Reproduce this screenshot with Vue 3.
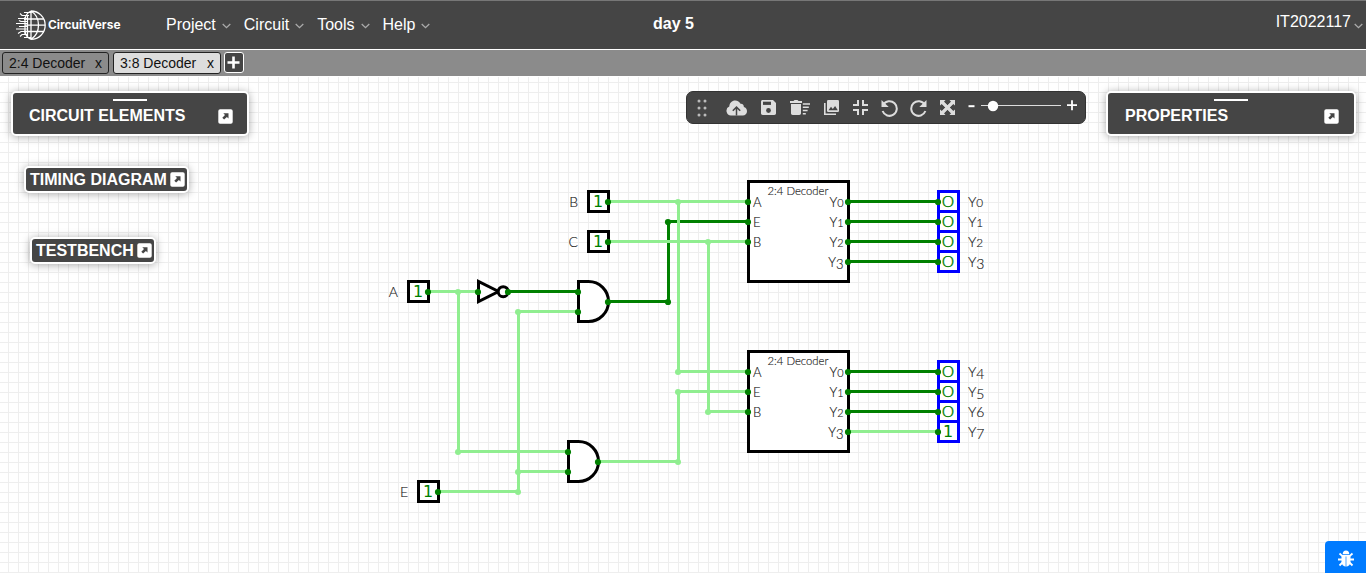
<script setup>
const menus = ['Project', 'Circuit', 'Tools', 'Help']

const inputs = [
  { name: 'B', x: 598.5, y: 201.5 },
  { name: 'C', x: 598.5, y: 241.5 },
  { name: 'A', x: 418.5, y: 291.5 },
  { name: 'E', x: 428.5, y: 491.5 },
]
const decoders = [{ y: 181.5 }, { y: 351.5 }]
const outputs = [0, 0, 0, 0, 0, 0, 0, 1].map((value, i) => ({
  value,
  digit: i,
  y: (i < 4 ? 201.5 : 371.5) + (i % 4) * 20,
}))
const rows = [0, 1, 2, 3]
const pins = ['A', 'E', 'B']

// Old-style numerals: 0-2 sit at x-height, 3-5 and 7 hang below the baseline.
const digitSize = (d, size) => (d < 3 ? size * 0.84 : size)
const digitShift = (d) => ([3, 4, 5, 7].includes(d) ? 2 : 0)

const darkWires = [
  'M508 291.5H578', 'M608 301.5H668.5V221.5H748',
  ...[201.5, 221.5, 241.5, 261.5, 371.5, 391.5, 411.5].map((y) => `M848 ${y}H938`),
]
const lightWires = [
  'M608 201.5H748', 'M608 241.5H748', 'M428 291.5H478', 'M458.5 291.5V451.5H568',
  'M438 491.5H518.5V311.5H578', 'M518.5 471.5H568', 'M598 461.5H678.5V391.5H748',
  'M678.5 201.5V371.5H748', 'M708.5 241.5V411.5H748', 'M848 431.5H938',
]
const lightNodes = [
  [678, 202], [708, 242], [458, 292], [518, 312], [458, 452], [518, 472], [518, 492],
  [678, 372], [678, 392], [678, 462], [708, 412],
]
const darkNodes = [
  [608, 202], [608, 242], [428, 292], [478, 292], [508, 292], [578, 292], [578, 312], [608, 302],
  [668, 302], [668, 222], [438, 492], [568, 452], [568, 472], [598, 462],
  ...[202, 222, 242, 372, 392, 412].map((y) => [748, y]),
  ...[202, 222, 242, 262, 372, 392, 412, 432].flatMap((y) => [[848, y], [938, y]]),
]
const panels = [
  { title: 'CIRCUIT ELEMENTS', cls: 'elements', large: true },
  { title: 'PROPERTIES', cls: 'properties', large: true },
  { title: 'TIMING DIAGRAM', cls: 'timing', large: false },
  { title: 'TESTBENCH', cls: 'testbench', large: false },
]
</script>

<template>
  <div class="app">
    <header class="navbar">
      <svg class="logo" width="110" height="34" viewBox="0 0 110 34">
        <g fill="none" stroke="#fff" stroke-width="1.3">
          <path d="M16 3a14.2 14.2 0 0 1 0 28.400M16 3v28.400M16 3c10 6 10 22 0 28.400M9 11h20M10 17.200h20M9 23.500h20M16 3c-4 2-6 6-6 9M16 31.400c-4-2-6-6-6-9" />
          <path d="M16 4.500H9M14 7.500H7l-2-2M13 10.500H3M13 13.500H6l-2-1M13 15.500H1M13 18.500H4M13 21H1M13 23.500H6l-3 2M13 26.500H7l-2 2M16 29.500H9" stroke-width="1.100" />
          <path d="M10 9v17M12.500 7v21" stroke-width="1.200" />
        </g>
        <text x="33" y="21" textLength="72.500" lengthAdjust="spacingAndGlyphs">CircuitVerse</text>
      </svg>
      <nav class="menus">
        <span v-for="m in menus" :key="m" class="menu">{{ m }}<svg class="caret" width="9" height="6" viewBox="0 0 9 6"><path d="M.7 1l3.800 3.700L8.300 1" /></svg></span>
      </nav>
      <strong class="project-name">day 5</strong>
      <span class="user">IT2022117<svg class="caret" width="9" height="6" viewBox="0 0 9 6"><path d="M.7 1l3.800 3.700L8.300 1" /></svg></span>
    </header>

    <div class="tabs">
      <div class="tab"><span>2:4 Decoder</span><span>x</span></div>
      <div class="tab current"><span>3:8 Decoder</span><span>x</span></div>
      <button class="add"><svg width="13" height="13" viewBox="0 0 13 13"><path d="M6.500 0.500v12M.5 6.500h12" stroke="#fff" stroke-width="2.600" /></svg></button>
    </div>

    <main class="workspace">
      <svg class="circuit" width="1366" height="497" viewBox="0 76 1366 497">
        <defs>
          <pattern id="grid" x="8" y="2" width="10" height="10" patternUnits="userSpaceOnUse">
            <path d="M0 .5H10M.5 0V10" stroke="#eee" />
          </pattern>
        </defs>
        <rect y="77" width="1366" height="496" fill="url(#grid)" />

        <g class="body">
          <rect v-for="d in decoders" :key="d.y" x="748.500" :y="d.y" width="100" height="100" />
          <rect v-for="p in inputs" :key="p.name" :x="p.x - 10" :y="p.y - 10" width="20" height="20" />
          <path d="M478.500 281.500V301.500L498.500 291.500Z" />
          <circle cx="503.200" cy="291.700" r="5" />
          <path d="M578.500 281.500h10a20 20 0 0 1 0 40h-10z" />
          <path d="M568.500 441.500h10a20 20 0 0 1 0 40h-10z" />
        </g>
        <rect v-for="o in outputs" :key="'r' + o.digit" class="output" x="938.500" :y="o.y - 10" width="20" height="20" />

        <path v-for="w in darkWires" :key="w" class="wire dark" :d="w" />
        <path v-for="w in lightWires" :key="w" class="wire light" :d="w" />
        <circle v-for="(n, i) in lightNodes" :key="'l' + i" :cx="n[0]" :cy="n[1]" r="3" fill="lightgreen" />
        <circle v-for="(n, i) in darkNodes" :key="'d' + i" :cx="n[0]" :cy="n[1]" r="3.100" fill="green" />

        <g v-for="p in inputs" :key="'t' + p.name">
          <text class="label" :x="p.x - 20.500" :y="p.y + 5.500" text-anchor="end">{{ p.name }}</text>
          <text class="one" :x="p.x - .5" :y="p.y + 5.800" text-anchor="middle">1</text>
        </g>
        <g v-for="d in decoders" :key="'n' + d.y">
          <text class="name" x="767.500" :y="d.y + 13.500" textLength="61" lengthAdjust="spacingAndGlyphs">2:4 Decoder</text>
          <text v-for="(p, i) in pins" :key="p" class="pin" x="753" :y="d.y + 25.500 + i * 20">{{ p }}</text>
          <text v-for="r in rows" :key="r" class="pin" x="843.500" :y="d.y + 25.500 + r * 20" text-anchor="end">Y<tspan :dy="digitShift(r)" :font-size="digitSize(r, 13)">{{ r }}</tspan></text>
        </g>
        <g v-for="o in outputs" :key="'o' + o.digit">
          <text v-if="o.value" class="one" x="948" :y="o.y + 5.800" text-anchor="middle">1</text>
          <text v-else class="zero" x="942" :y="o.y + 5.500" textLength="12" lengthAdjust="spacingAndGlyphs">0</text>
          <text class="label" x="968" :y="o.y + 5.500">Y<tspan :dy="digitShift(o.digit)" :font-size="digitSize(o.digit, 14)">{{ o.digit }}</tspan></text>
        </g>
      </svg>

      <section v-for="p in panels" :key="p.title" class="panel" :class="[p.cls, { large: p.large }]">
        <i v-if="p.large" class="grip"></i>
        <span>{{ p.title }}</span>
        <svg width="15" height="15" viewBox="0 0 15 15"><rect x=".3" y=".3" width="14.400" height="14.400" rx="1.800" fill="#fff" /><path d="M5.300 4.300h5.200v5.200L8.900 7.900 6.100 10.600 4.300 8.800 7 6.100Z" fill="#454545" /></svg>
      </section>

      <div class="toolbar">
        <svg class="drag" width="10" height="18" viewBox="0 0 10 18"><g fill="#bbb"><circle v-for="n in 6" :key="n" :cx="n % 2 ? 2 : 8" :cy="2 + Math.floor((n - 1) / 2) * 7" r="1.500" /></g></svg>
        <svg class="cloud" width="21" height="16" viewBox="0 0 21 16"><path d="M5 15.500A4.700 4.700 0 0 1 3.300 6.500C3.500 3 6 .5 9.200.5c2.500 0 4.400 1.300 5.300 3.300 2-.3 3.600 1.300 3.300 3.300 2 .6 3.200 2.100 3.200 4.100 0 2.400-1.800 4.300-4.200 4.300Z" fill="#ddd" /><path d="M10.500 15.500V8M6.800 10.800l3.700-3.700 3.700 3.700" fill="none" stroke="#454545" stroke-width="1.500" /></svg>
        <svg class="save" width="15" height="15" viewBox="0 0 15 15"><path d="M1.700 0H12l3 3v10.300c0 1-.7 1.700-1.700 1.700H1.700C.7 15 0 14.300 0 13.300V1.700C0 .7.700 0 1.700 0Z" fill="#ddd" /><path d="M2 1.700h8v3.200H2Z" fill="#454545" /><circle cx="7.500" cy="10.500" r="2.400" fill="#454545" /></svg>
        <svg class="trash" width="20" height="15" viewBox="0 0 20 15"><path d="M0 1h3.500L4.500 0h3l1 1H12v2H0ZM1 4h10v9.300c0 1-.7 1.700-1.700 1.700H2.700C1.700 15 1 14.300 1 13.300ZM12.800 3.200H20v1.600h-7.200ZM12.800 6.500h6v1.600h-6ZM12.800 9.700h4.800v1.600h-4.800ZM12.800 12.900h3v1.600h-3Z" fill="#ddd" /></svg>
        <svg class="images" width="15" height="15" viewBox="0 0 15 15"><path d="M.8 3v11.200H12" fill="none" stroke="#ddd" stroke-width="1.600" /><rect x="3" width="12" height="12" rx="1.300" fill="#ddd" /><path d="m4.500 10.300 2.500-3.500 1.800 2.300 2.300-3 2.700 4.200Z" fill="#454545" /></svg>
        <svg class="compress" width="15" height="15" viewBox="0 0 15 15"><path d="M0 5h5V0M10 0v5h5M0 10h5v5M10 15v-5h5" fill="none" stroke="#ddd" stroke-width="2" /></svg>
        <svg class="turn undo" width="17" height="18" viewBox="0 0 17 18"><path d="M2.200 5.800A7.300 7.300 0 1 1 1.600 12" fill="none" stroke="#ddd" stroke-width="2" /><path d="M.5 1v7h7.200Z" fill="#ddd" /></svg>
        <svg class="turn redo" width="17" height="18" viewBox="0 0 17 18"><path d="M14.800 5.800A7.300 7.300 0 1 0 15.400 12" fill="none" stroke="#ddd" stroke-width="2" /><path d="M16.500 1v7H9.300Z" fill="#ddd" /></svg>
        <svg class="fit" width="15" height="15" viewBox="0 0 15 15"><path d="M0 0h5.500L4 1.800l3.500 3.500L11 1.800 9.500 0H15v5.500L13.200 4 9.700 7.500l3.500 3.500L15 9.500V15H9.500l1.500-1.800-3.500-3.500L4 13.200 5.500 15H0V9.500L1.800 11l3.500-3.500L1.800 4 0 5.500Z" fill="#ddd" /><path d="M3 3l9 9M12 3l-9 9" stroke="#ddd" stroke-width="2.600" /></svg>
        <svg class="zoom" width="109" height="14" viewBox="0 0 109 14"><path d="M.5 7.200h6" stroke="#fff" stroke-width="2" /><path d="M13 6.500h80" stroke="#ddd" /><circle cx="25" cy="7" r="5.200" fill="#fff" /><path d="M99 6.200h10M104 1.200v10" stroke="#fff" stroke-width="1.800" /></svg>
      </div>

      <button class="bug"><svg width="16" height="17" viewBox="0 0 16 17"><path d="M4.700 4.300a3.300 3.900 0 0 1 6.600 0ZM3.500 5h9v7c0 2.500-2 4.500-4.500 4.500S3.500 14.500 3.500 12Z" fill="#fff" /><path d="M1.500 3.500 4.500 6.200M14.500 3.500l-3 2.700M0 9.500h16M1.500 15.500l3-3M14.500 15.500l-3-3" stroke="#fff" stroke-width="1.800" /><path d="M8 6.500v10" stroke="#007bff" stroke-width=".7" /></svg></button>
    </main>
  </div>
</template>

<style>
body {
  margin: 0;
  overflow: hidden;
}
</style>

<style scoped>
.app {
  width: 1366px;
  height: 573px;
  overflow: hidden;
  background: #fff;
  font-family: "Liberation Sans", Arial, sans-serif;
}
.navbar {
  box-sizing: border-box;
  height: 50px;
  display: flex;
  position: relative;
  background: #454545;
  border-top: 1px solid #777;
  border-bottom: 1px solid #fff;
  color: #fff;
  font-size: 16px;
  line-height: 20px;
}
.logo {
  margin: 7px 0 0 15px;
}
.logo text {
  fill: #fff;
  font: 700 11.5px Inter, "Liberation Sans", sans-serif;
}
.menus {
  display: flex;
  margin: 14px 0 0 41px;
}
.menu {
  margin-right: 13px;
}
.caret {
  margin-left: 6px;
  vertical-align: 1px;
  fill: none;
  stroke: #aaa;
  stroke-width: 1.3;
}
.project-name {
  position: absolute;
  left: 653px;
  top: 13px;
}
.user {
  margin: 11px 3px 0 auto;
  white-space: nowrap;
}
.user .caret {
  margin-left: 3px;
  vertical-align: -2px;
}
.tabs {
  box-sizing: border-box;
  height: 26px;
  padding: 2px;
  display: flex;
  gap: 4px;
  background: #8b8b8b;
}
.tab {
  box-sizing: border-box;
  width: 107px;
  height: 22px;
  padding: 0 6px;
  display: flex;
  justify-content: space-between;
  border: 1px solid #222;
  border-radius: 3px;
  font-size: 14px;
  line-height: 20px;
  color: #111;
}
.tab.current {
  width: 108px;
  background: #ddd;
}
.add {
  box-sizing: border-box;
  width: 20px;
  height: 21px;
  margin: 0 0 0 -1px;
  padding: 0 1px 0 0;
  display: flex;
  align-items: center;
  justify-content: center;
  background: #454545;
  border: 1px solid #fff;
  border-radius: 3px;
}
.workspace {
  position: relative;
  height: 497px;
}
.circuit {
  display: block;
}
.body > * {
  fill: #fff;
  stroke: #000;
  stroke-width: 3;
}
.output {
  fill: #fff;
  stroke: blue;
  stroke-width: 3;
}
.wire {
  fill: none;
  stroke-width: 3;
}
.dark {
  stroke: green;
}
.light {
  stroke: lightgreen;
}
.label,
.pin,
.name {
  font-family: Lato, sans-serif;
  font-weight: 300;
  fill: #111;
  stroke: #333;
  stroke-width: 0.15;
}
.label {
  font-size: 14px;
}
.pin {
  font-size: 13px;
}
.name {
  font-size: 11px;
}
.one {
  font: 16px "DejaVu Sans", sans-serif;
  fill: green;
}
.zero {
  font: 300 16px Lato, sans-serif;
  fill: green;
  stroke: green;
  stroke-width: 0.25;
}
.panel {
  position: absolute;
  box-sizing: border-box;
  display: flex;
  align-items: center;
  justify-content: space-between;
  height: 27px;
  padding: 0 2px 0 4px;
  background: #454545;
  border: 2px solid #fff;
  border-radius: 5px;
  box-shadow: 0 1px 9px rgba(0, 0, 0, 0.35);
  color: #fff;
  font-size: 16px;
  font-weight: 700;
  line-height: 20px;
  white-space: nowrap;
}
.panel.large {
  height: 45px;
  padding: 5px 14px 0 16px;
}
.grip {
  position: absolute;
  top: 6px;
  left: 50%;
  width: 34px;
  height: 2px;
  margin-left: -17px;
  background: #fff;
}
.elements {
  left: 11px;
  top: 15px;
  width: 238px;
}
.panel.properties {
  left: 1106px;
  top: 15px;
  width: 250px;
  padding-left: 17px;
  padding-right: 15px;
}
.timing {
  left: 24px;
  top: 90px;
  width: 165px;
}
.testbench {
  left: 30px;
  top: 161px;
  width: 126px;
}
.toolbar {
  position: absolute;
  left: 686px;
  top: 15px;
  box-sizing: border-box;
  width: 400px;
  height: 33px;
  padding-left: 10px;
  display: flex;
  align-items: center;
  background: #454545;
  border: 1px solid #333;
  border-radius: 7px;
}
.toolbar svg {
  flex: none;
}
.cloud {
  margin-left: 19px;
}
.save,
.trash,
.images,
.compress {
  margin-left: 14px;
}
.undo {
  margin-left: 13px;
}
.redo {
  margin-left: 12px;
}
.fit,
.zoom {
  margin-left: 13px;
}
.zoom {
  margin-top: -3px;
}
.bug {
  position: absolute;
  right: 0;
  bottom: 0;
  width: 41px;
  height: 32px;
  padding: 6px 0 0;
  border: 0;
  border-radius: 4px 0 0 0;
  background: #007bff;
}
</style>
